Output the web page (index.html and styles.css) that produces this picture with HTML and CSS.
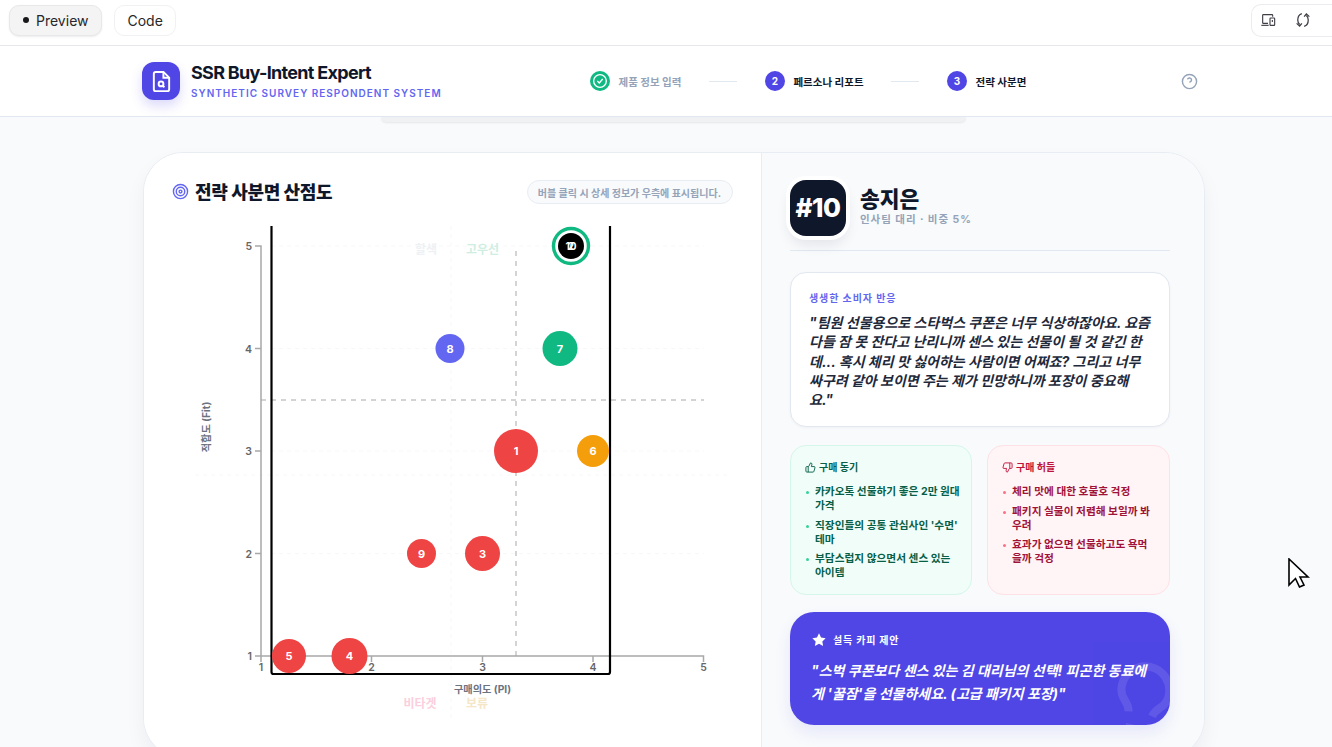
FILE: index.html
```html
<!DOCTYPE html>
<html lang="ko">
<head>
  <meta charset="UTF-8">
  <meta name="viewport" content="width=device-width, initial-scale=1.0">
  <title>SSR Buy-Intent Expert</title>
  <link rel="stylesheet" href="styles.css">
</head>
<body>
  <div class="toolbar">
    <div class="tabs">
      <button class="tab tab-active"><span class="tab-dot"></span>Preview</button>
      <button class="tab">Code</button>
    </div>
    <div class="tools">
      <svg class="tool-icon" viewBox="0 0 24 24">
        <path d="M12 17H5a1 1 0 0 1-1-1V5a1 1 0 0 1 1-1h13a1 1 0 0 1 1 1v2"/>
        <path d="M2 20h11"/>
        <rect x="15" y="9" width="7" height="11" rx="1"/>
        <path d="M18.500 12v3"/>
      </svg>
      <svg class="tool-icon tool-icon-sync" viewBox="0 0 24 24">
        <path d="M10.500 3.500C7 4.500 5 8 5 12c0 2.500.8 4.500 2.500 6"/>
        <path d="M3.500 16.500 7.500 20l3-3.500"/>
        <path d="M13.500 20.500c3.500-1 5.500-4.500 5.500-8.500 0-2.500-.8-4.500-2.500-6"/>
        <path d="M13.500 7.500 16.500 4l4 3.500"/>
      </svg>
    </div>
  </div>

  <header class="app-header">
    <div class="brand">
      <div class="brand-logo">
        <svg viewBox="0 0 24 24">
          <path d="M14 2H6a2 2 0 0 0-2 2v16a2 2 0 0 0 2 2h12a2 2 0 0 0 2-2V8z"/>
          <polyline points="14 2 14 8 20 8"/>
          <circle cx="11.500" cy="14.500" r="2.500"/>
          <path d="M13.250 16.250 15 18"/>
        </svg>
      </div>
      <div>
        <div class="brand-name">SSR Buy-Intent Expert</div>
        <div class="brand-sub">SYNTHETIC SURVEY RESPONDENT SYSTEM</div>
      </div>
    </div>
    <div class="steps">
      <div class="step step-done">
        <span class="step-num">
          <svg viewBox="0 0 24 24"><circle cx="12" cy="12" r="9.500"/><path d="m8 12 3 3 5-6"/></svg>
        </span>
        제품 정보 입력
      </div>
      <span class="step-line"></span>
      <div class="step"><span class="step-num">2</span>페르소나 리포트</div>
      <span class="step-line"></span>
      <div class="step"><span class="step-num">3</span>전략 사분면</div>
    </div>
    <svg class="help" viewBox="0 0 24 24">
      <circle cx="12" cy="12" r="10"/>
      <path d="M9.090 9a3 3 0 0 1 5.830 1c0 2-3 3-3 3"/>
      <path d="M12 17h.01"/>
    </svg>
  </header>

  <main class="page">
    <div class="prev-card"></div>

    <section class="board">
      <div class="chart-panel">
        <div class="chart-head">
          <h2 class="chart-title">
            <svg viewBox="0 0 24 24"><circle cx="12" cy="12" r="10"/><circle cx="12" cy="12" r="6"/><circle cx="12" cy="12" r="2"/></svg>
            전략 사분면 산점도
          </h2>
          <span class="chart-hint">버블 클릭 시 상세 정보가 우측에 표시됩니다.</span>
        </div>

        <svg class="chart" viewBox="172 222 560 510">
          <!-- faint grid -->
          <g class="grid">
            <line x1="271" y1="246" x2="704" y2="246"/>
            <line x1="271" y1="348.500" x2="704" y2="348.500"/>
            <line x1="271" y1="451" x2="704" y2="451"/>
            <line x1="271" y1="553.500" x2="704" y2="553.500"/>
            <line x1="195" y1="475" x2="730" y2="475"/>
            <line x1="451" y1="226" x2="451" y2="722"/>
          </g>

          <text class="q-label q-hot" x="426" y="254">할색</text>
          <text class="q-label q-high" x="482.500" y="254">고우선</text>
          <text class="q-label q-non" x="420" y="708">비타겟</text>
          <text class="q-label q-hold" x="477" y="708">보류</text>

          <g class="axis">
            <path d="M255 246H261V656"/>
            <path d="M255 348.500H261M255 451H261M255 553.500H261M255 656H261"/>
            <path d="M261 662V656H703.500V662M371.500 656V662M482.500 656V662M593 656V662"/>
          </g>
          <g class="tick">
            <text x="252" y="250" text-anchor="end">5</text>
            <text x="252" y="352.500" text-anchor="end">4</text>
            <text x="252" y="455" text-anchor="end">3</text>
            <text x="252" y="557.500" text-anchor="end">2</text>
            <text x="252" y="660" text-anchor="end">1</text>
            <text x="261" y="671" text-anchor="middle">1</text>
            <text x="371.500" y="671" text-anchor="middle">2</text>
            <text x="482.500" y="671" text-anchor="middle">3</text>
            <text x="593" y="671" text-anchor="middle">4</text>
            <text x="703.500" y="671" text-anchor="middle">5</text>
          </g>
          <text class="axis-name" x="482.500" y="693" text-anchor="middle">구매의도 (PI)</text>
          <text class="axis-name" transform="translate(210 427) rotate(-90)" text-anchor="middle">적합도 (Fit)</text>

          <line class="mean" x1="261" y1="400" x2="704" y2="400"/>
          <line class="mean" x1="516" y1="251" x2="516" y2="656"/>

          <path class="frame" d="M271.500 226V672a2 2 0 0 0 2 2H608a2 2 0 0 0 2-2V226"/>

          <circle class="dot dot-red" cx="289" cy="656" r="17"/>
          <text class="dot-num" x="289" y="660">5</text>
          <circle class="dot dot-red" cx="349.500" cy="656" r="18"/>
          <text class="dot-num" x="349.500" y="660">4</text>
          <circle class="dot dot-red" cx="421.500" cy="553.500" r="14.500"/>
          <text class="dot-num" x="421.500" y="557.500">9</text>
          <circle class="dot dot-red" cx="482.500" cy="553.500" r="17.500"/>
          <text class="dot-num" x="482.500" y="557.500">3</text>
          <circle class="dot dot-red" cx="516" cy="451" r="22"/>
          <text class="dot-num" x="516" y="455">1</text>
          <circle class="dot dot-amber" cx="593" cy="451" r="16"/>
          <text class="dot-num" x="593" y="455">6</text>
          <circle class="dot dot-indigo" cx="450" cy="348.500" r="14.500"/>
          <text class="dot-num" x="450" y="352.500">8</text>
          <circle class="dot dot-green" cx="560" cy="348.500" r="17.500"/>
          <text class="dot-num" x="560" y="352.500">7</text>
          <circle class="dot-ring" cx="571" cy="246" r="17.500"/>
          <circle class="dot dot-black" cx="571" cy="246" r="13"/>
          <text class="dot-num dot-num-small" x="571" y="249.500">2</text>
          <text class="dot-num dot-num-small" x="571" y="249.500">10</text>
        </svg>
      </div>

      <aside class="detail">
        <div class="persona">
          <div class="persona-id">#10</div>
          <div>
            <div class="persona-name">송지은</div>
            <div class="persona-meta">인사팀 대리 · 비중 5%</div>
          </div>
        </div>

        <div class="quote-card">
          <div class="quote-label">생생한 소비자 반응</div>
          <p class="quote-text">"팀원 선물용으로 스타벅스 쿠폰은 너무 식상하잖아요. 요즘 다들 잠 못 잔다고 난리니까 센스 있는 선물이 될 것 같긴 한데... 혹시 체리 맛 싫어하는 사람이면 어쩌죠? 그리고 너무 싸구려 같아 보이면 주는 제가 민망하니까 포장이 중요해요."</p>
        </div>

        <div class="reasons">
          <div class="reason reason-good">
            <div class="reason-title">
              <svg viewBox="0 0 24 24"><path d="M7 10v12"/><path d="M15 5.880 14 10h5.830a2 2 0 0 1 1.920 2.560l-2.330 8A2 2 0 0 1 17.500 22H4a2 2 0 0 1-2-2v-8a2 2 0 0 1 2-2h2.760a2 2 0 0 0 1.790-1.110L12 2a3.130 3.130 0 0 1 3 3.880Z"/></svg>
              구매 동기
            </div>
            <ul>
              <li>카카오톡 선물하기 좋은 2만 원대 가격</li>
              <li>직장인들의 공통 관심사인 '수면' 테마</li>
              <li>부담스럽지 않으면서 센스 있는 아이템</li>
            </ul>
          </div>
          <div class="reason reason-bad">
            <div class="reason-title">
              <svg viewBox="0 0 24 24"><path d="M17 14V2"/><path d="M9 18.120 10 14H4.170a2 2 0 0 1-1.920-2.560l2.330-8A2 2 0 0 1 6.500 2H20a2 2 0 0 1 2 2v8a2 2 0 0 1-2 2h-2.760a2 2 0 0 0-1.790 1.110L12 22a3.130 3.130 0 0 1-3-3.880Z"/></svg>
              구매 허들
            </div>
            <ul>
              <li>체리 맛에 대한 호불호 걱정</li>
              <li>패키지 실물이 저렴해 보일까 봐 우려</li>
              <li>효과가 없으면 선물하고도 욕먹을까 걱정</li>
            </ul>
          </div>
        </div>

        <div class="copy-card">
          <svg class="copy-bulb" viewBox="0 0 24 24"><path d="M15 14c.2-1 .7-1.700 1.500-2.500 1-.9 1.500-2.200 1.500-3.500A6 6 0 0 0 6 8c0 1 .2 2.200 1.500 3.500.7.7 1.300 1.500 1.500 2.500"/><path d="M9 18h6"/><path d="M10 22h4"/></svg>
          <div class="copy-label">
            <svg viewBox="0 0 24 24"><polygon points="12 2 15.090 8.260 22 9.270 17 14.140 18.180 21.020 12 17.770 5.820 21.020 7 14.140 2 9.270 8.910 8.260 12 2"/></svg>
            설득 카피 제안
          </div>
          <p class="copy-text">"스벅 쿠폰보다 센스 있는 김 대리님의 선택! 피곤한 동료에게 '꿀잠'을 선물하세요. (고급 패키지 포장)"</p>
        </div>
      </aside>
    </section>
  </main>

  <svg class="cursor" viewBox="0 0 22 30">
    <path d="M1 1V27L7.500 20.500 11.500 29 16 27 12 19H20Z"/>
  </svg>
</body>
</html>
```

FILE: styles.css
```css
* {
  box-sizing: border-box;
}
html, body {
  margin: 0;
  height: 747px;
  overflow: hidden;
}
body {
  font-family: Inter, "Noto Sans CJK KR", sans-serif;
  background: #fff;
  color: #0f172a;
}

/* top bar */
.toolbar {
  height: 46px;
  display: flex;
  justify-content: space-between;
  align-items: center;
  padding-left: 9px;
  border-bottom: 1px solid #e5e7eb;
}
.tabs {
  display: flex;
  gap: 12px;
  margin-bottom: 5px;
}
.tab {
  height: 31px;
  padding: 0 12px 0 13px;
  display: flex;
  align-items: center;
  gap: 7px;
  font-family: Inter, sans-serif;
  font-size: 14px;
  color: #27272a;
  background: #fff;
  border: 1px solid #f1f1f3;
  border-radius: 10px;
}
.tab-active {
  background: #f4f4f5;
  border-color: #e8e8ea;
  box-shadow: 0 1px 2px rgba(0, 0, 0, 0.08);
}
.tab-dot {
  width: 6px;
  height: 6px;
  border-radius: 50%;
  background: #18181b;
}
.tools {
  width: 81px;
  height: 33px;
  margin-bottom: 5px;
  padding-left: 8px;
  display: flex;
  align-items: center;
  gap: 18px;
  border: 1px solid #ececee;
  border-right: 0;
  border-radius: 10px 0 0 10px;
}
.tool-icon {
  width: 16px;
  height: 16px;
  fill: none;
  stroke: #3f3f46;
  stroke-width: 1.700;
}
.tool-icon-sync {
  width: 18px;
  height: 18px;
}

/* app header */
.app-header {
  height: 71px;
  padding-left: 142px;
  display: flex;
  align-items: center;
  background: #fff;
  border-bottom: 1px solid #e2e8f0;
}
.brand {
  width: 448px;
  display: flex;
  align-items: center;
  gap: 11px;
}
.brand-logo {
  width: 38px;
  height: 38px;
  display: flex;
  align-items: center;
  justify-content: center;
  background: #4f46e5;
  border-radius: 12px;
  box-shadow: 0 6px 12px rgba(79, 70, 229, 0.2);
}
.brand-logo svg {
  width: 23px;
  height: 23px;
  fill: none;
  stroke: #fff;
  stroke-width: 2;
}
.brand-name {
  font-size: 18px;
  font-weight: 700;
  letter-spacing: -0.7px;
  line-height: 22px;
  margin-top: -1px;
}
.brand-sub {
  margin-top: 3px;
  font-size: 10px;
  font-weight: 600;
  letter-spacing: 1px;
  line-height: 12px;
  color: #6366f1;
}
.steps {
  width: 591px;
  display: flex;
  align-items: center;
}
.step {
  display: flex;
  align-items: center;
  gap: 8.500px;
  font-size: 10.500px;
  font-weight: 700;
  color: #0f172a;
}
.step-num {
  width: 20px;
  height: 20px;
  display: flex;
  align-items: center;
  justify-content: center;
  border-radius: 50%;
  background: #4f46e5;
  color: #fff;
  font-size: 10px;
}
.step-done {
  color: #94a3b8;
}
.step-done .step-num {
  background: #10b981;
}
.step-num svg {
  width: 16px;
  height: 16px;
  fill: none;
  stroke: #fff;
  stroke-width: 2;
}
.step-line {
  width: 28px;
  height: 1px;
  margin: 0 27.750px;
  background: #e2e8f0;
}
.help {
  width: 17px;
  height: 17px;
  fill: none;
  stroke: #94a3b8;
  stroke-width: 2;
}

/* main area */
.page {
  height: 630px;
  background: #f8fafc;
  overflow: hidden;
}
.prev-card {
  width: 585px;
  height: 5px;
  margin-left: 381px;
  background: #f0f1f3;
  border-radius: 0 0 12px 12px;
  box-shadow: 0 1px 2px rgba(15, 23, 42, 0.08);
}
.board {
  width: 1062px;
  height: 606px;
  margin: 30px 0 0 143px;
  display: grid;
  grid-template-columns: 617px 1fr;
  background: #fff;
  border: 1px solid #e8edf3;
  border-radius: 40px;
  box-shadow: 0 10px 20px rgba(15, 23, 42, 0.05);
  overflow: hidden;
}
.chart-panel {
  padding: 27px 28px 0 27px;
  background: #fff;
}
.chart-head {
  display: flex;
  justify-content: space-between;
  align-items: center;
  height: 24px;
}
.chart-title {
  margin: 0 0 2px 1px;
  display: flex;
  align-items: center;
  gap: 6px;
  font-size: 18px;
  font-weight: 800;
  letter-spacing: -0.3px;
}
.chart-title svg {
  width: 17px;
  height: 17px;
  fill: none;
  stroke: #6366f1;
  stroke-width: 2;
}
.chart-hint {
  height: 24px;
  padding: 0 11px 0 10px;
  display: flex;
  align-items: center;
  font-size: 10px;
  font-weight: 700;
  color: #94a3b8;
  background: #f8fafc;
  border: 1px solid #e8edf3;
  border-radius: 12px;
}
.chart {
  display: block;
  width: 560px;
  height: 510px;
  margin: 18px 0 0 1px;
  overflow: visible;
}
.grid line {
  stroke: #f7f8fa;
  stroke-dasharray: 4 4;
}
.q-label {
  font-size: 12px;
  font-weight: 700;
  text-anchor: middle;
}
.q-hot { fill: #eef1f4; }
.q-high { fill: #cfeee2; }
.q-non { fill: #fbcfdc; }
.q-hold { fill: #f5e6c8; }
.axis path {
  fill: none;
  stroke: #a8a8a8;
  stroke-width: 1.500;
}
.tick text {
  font-size: 10.500px;
  font-weight: 600;
  fill: #666;
}
.axis-name {
  font-size: 10.200px;
  font-weight: 700;
  fill: #6b7280;
}
.mean {
  stroke: #a8a8a8;
  stroke-dasharray: 5 5;
}
.frame {
  fill: none;
  stroke: #000;
  stroke-width: 2.200;
}
.dot-red { fill: #ef4444; }
.dot-amber { fill: #f59e0b; }
.dot-indigo { fill: #6366f1; }
.dot-green { fill: #10b981; }
.dot-black { fill: #000; }
.dot-ring {
  fill: #fff;
  stroke: #10b981;
  stroke-width: 3.500;
}
.dot-num {
  font-size: 11px;
  font-weight: 700;
  fill: #fff;
  text-anchor: middle;
}
.dot-num-small {
  font-size: 10px;
}

/* right panel */
.detail {
  padding: 27px 34px 0 28px;
  background: #f8fafc;
  border-left: 1px solid #e8edf3;
}
.persona {
  display: flex;
  align-items: center;
  gap: 14px;
  height: 71px;
  padding-bottom: 15px;
  border-bottom: 1px solid #e2e8f0;
}
.persona-id {
  width: 56px;
  height: 56px;
  display: flex;
  align-items: center;
  justify-content: center;
  font-size: 26px;
  font-weight: 800;
  letter-spacing: -0.5px;
  color: #fff;
  background: #0f172a;
  border-radius: 16px;
  box-shadow: 0 0 0 4px #fff, 0 8px 14px rgba(15, 23, 42, 0.1);
}
.persona-name {
  font-size: 21.500px;
  font-weight: 800;
  line-height: 27px;
  margin-top: -2px;
}
.persona-meta {
  font-size: 10.500px;
  font-weight: 700;
  letter-spacing: 0.950px;
  line-height: 14px;
  color: #94a3b8;
}
.quote-card {
  height: 155px;
  margin-top: 21px;
  padding: 18px 18px;
  background: #fff;
  border: 1px solid #e2e8f0;
  border-radius: 16px;
  box-shadow: 0 1px 3px rgba(15, 23, 42, 0.04);
}
.quote-label {
  font-size: 10px;
  font-weight: 700;
  letter-spacing: 0.900px;
  line-height: 14px;
  color: #6366f1;
}
.quote-text {
  margin: 8px 0 0;
  font-size: 14px;
  font-weight: 700;
  font-style: italic;
  line-height: 19.250px;
  color: #1e293b;
}
.reasons {
  display: grid;
  grid-template-columns: 182px 183px;
  gap: 15px;
  margin-top: 18px;
}
.reason {
  height: 150px;
  padding: 14px 10px 14px 14px;
  border: 1px solid;
  border-radius: 16px;
  font-size: 10.700px;
  font-weight: 700;
}
.reason-title {
  display: flex;
  align-items: center;
  gap: 3px;
  font-size: 10px;
  line-height: 14px;
}
.reason-title svg {
  width: 11px;
  height: 11px;
  fill: none;
  stroke: currentColor;
  stroke-width: 2;
}
.reason ul {
  margin: 11px 0 0;
  padding: 0;
  list-style: none;
  display: flex;
  flex-direction: column;
  gap: 5.500px;
}
.reason li {
  position: relative;
  padding-left: 10px;
  line-height: 14px;
}
.reason li::before {
  content: "";
  position: absolute;
  left: 1px;
  top: 6px;
  width: 3px;
  height: 3px;
  border-radius: 50%;
}
.reason-good {
  background: #f1fdf9;
  border-color: #d5f7ea;
  color: #065f46;
}
.reason-good li::before {
  background: #34d399;
}
.reason-bad {
  padding-right: 16px;
  background: #fff5f6;
  border-color: #ffe1e6;
  color: #9f1239;
}
.reason-bad .reason-title {
  color: #be123c;
}
.reason-bad li::before {
  background: #fb7185;
}
.copy-card {
  position: relative;
  height: 113px;
  margin-top: 17px;
  padding: 20px 21px;
  background: #4f46e5;
  color: #fff;
  border-radius: 24px;
  box-shadow: 0 8px 16px rgba(79, 70, 229, 0.1);
  overflow: hidden;
}
.copy-bulb {
  position: absolute;
  right: -20px;
  bottom: -29px;
  width: 96px;
  height: 96px;
  transform: rotate(12deg);
  fill: none;
  stroke: #fff;
  stroke-width: 2;
  opacity: 0.1;
}
.copy-label {
  display: flex;
  align-items: center;
  gap: 6px;
  font-size: 10px;
  font-weight: 700;
  letter-spacing: 0.800px;
  line-height: 14px;
}
.copy-label svg {
  width: 16px;
  height: 16px;
  fill: #fff;
}
.copy-text {
  position: relative;
  margin: 11px 0 0;
  font-size: 14px;
  font-weight: 700;
  font-style: italic;
  line-height: 23px;
}

/* screen cursor caught in the capture */
.cursor {
  position: absolute;
  left: 1288px;
  top: 558px;
  width: 22px;
  height: 30px;
  fill: #fff;
  stroke: #000;
  stroke-width: 1.600;
}
```
